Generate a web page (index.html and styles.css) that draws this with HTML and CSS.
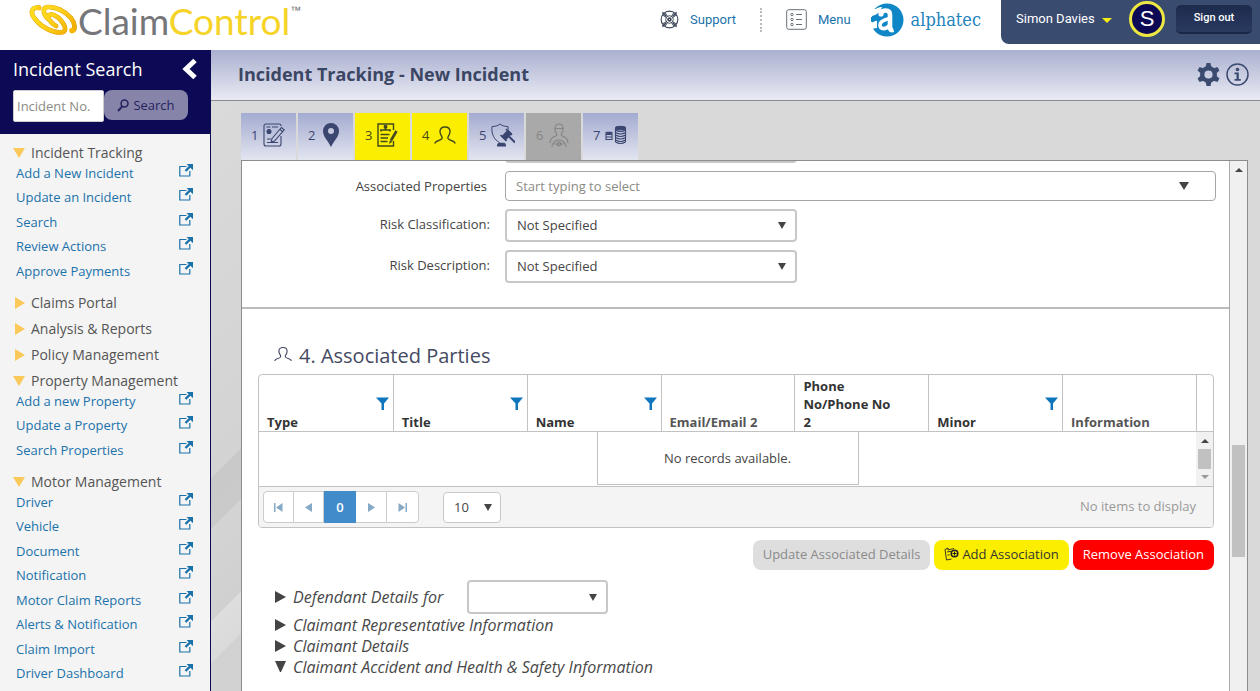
FILE: index.html
```html
<!DOCTYPE html>
<html lang="en">
<head>
<meta charset="utf-8">
<title>Incident Tracking - New Incident</title>
<link rel="stylesheet" href="styles.css">
</head>
<body>
<svg class="sprite" aria-hidden="true">
  <symbol id="i-open" viewBox="0 0 14 13"><path d="M7.500 2.500H.8v9.500h10V7" fill="none" stroke="currentColor" stroke-width="1.200"/><path d="M6.500 7 11.500 2" stroke="currentColor" stroke-width="2.400"/><path d="M7.500 0H14v6.300z" fill="currentColor"/></symbol>
  <symbol id="i-person" viewBox="0 0 22 18"><path d="M1 17c1-3 6-2 7-4.500 1-2-2-3-2-7C6 2.500 8 1 11 1s5 1.500 5 4.500c0 4-3 5-2 7 1 2.500 6 1.500 7 4.500" fill="none" stroke="currentColor" stroke-width="1.400" stroke-linecap="round"/></symbol>
  <symbol id="i-filter" viewBox="0 0 13 13"><path d="M0 .5h13L8 6.500V13H5.500V6.500z" fill="currentColor"/></symbol>
</svg>

<header class="top">
  <a class="logo" href="#">
    <svg class="logo-mark" width="49" height="32" viewBox="0 0 49 32">
      <defs><linearGradient id="gold" gradientUnits="userSpaceOnUse" x1="5" y1="0" x2="40" y2="32"><stop offset="0" stop-color="#ffdf1c"/><stop offset=".5" stop-color="#ffd21a"/><stop offset="1" stop-color="#f0ab00"/></linearGradient></defs>
      <g fill="none" stroke-linecap="round" stroke-linejoin="round">
        <g stroke="#d89a00" stroke-width="4.600">
          <path d="M10 3.500C2 3 1 9 6 15c7 9 19 14 26 13.500 6-.5 5-6 0-12-4-5-9-7-12-5.500-3 2 2 8 7 11"/>
          <path d="M43 27c4-1 3-8-1-13C36 7 26 2.500 19 3c-6 .5-5 6-1 11"/>
        </g>
        <g stroke="url(#gold)" stroke-width="3.800">
          <path d="M10 3.500C2 3 1 9 6 15c7 9 19 14 26 13.500 6-.5 5-6 0-12-4-5-9-7-12-5.500-3 2 2 8 7 11"/>
          <path d="M43 27c4-1 3-8-1-13C36 7 26 2.500 19 3c-6 .5-5 6-1 11"/>
        </g>
      </g>
      <circle cx="43" cy="26.500" r="2.800" fill="#f7b900"/><circle cx="10" cy="4" r="2.500" fill="#ffc81a"/>
    </svg>
    <span class="logo-text">Claim<span class="logo-gold">Control</span></span><span class="logo-tm">™</span>
  </a>
  <nav class="top-nav">
    <a class="top-link support" href="#">
      <svg width="19" height="19" viewBox="0 0 20 20" fill="none" stroke="#3d4658"><circle cx="10" cy="10" r="8.800" stroke-width="1.200"/><circle cx="10" cy="10" r="4"/><circle cx="10" cy="10" r="1.500" stroke-width="1.800"/><path d="M3 5.500 7 8M5.500 3 8 7M17 5.500 13 8M14.500 3 12 7M3 14.500 7 12M5.500 17 8 13M17 14.500 13 12M14.500 17 12 13"/><path d="M2.500 2.500l4 4M17.500 2.500l-4 4M2.500 17.500l4-4M17.500 17.500l-4-4" stroke-width="1.600"/></svg>
      Support</a>
    <span class="top-sep"></span>
    <a class="top-link" href="#">
      <svg width="21" height="21" viewBox="0 0 21 21" fill="none" stroke="#6b7078"><rect x=".7" y=".7" width="19.600" height="19.600" rx="2"/><path d="M10 5.500h6M10 10.500h6M10 15.500h6"/><circle cx="6" cy="5.500" r="1.200"/><circle cx="6" cy="10.500" r="1.200"/><circle cx="6" cy="15.500" r="1.200"/></svg>
      Menu</a>
    <a class="brand" href="#">
      <svg width="33" height="34" viewBox="0 0 33 34"><circle cx="16" cy="17" r="16.500" fill="#0f86c6"/><path d="M0 6h4.500C7 4.500 9 4 11 4L8 11l-3 3H0zM0 19l6-2v8l-6 1z" fill="#fff"/><path d="M1 13q4-1 7-3.500v8q-4 0-7 2z" fill="#0f86c6"/><g fill="none" stroke="#fff"><path d="M9.500 10.500C11 7 19 5.500 19 12v13q0 3 3.500 1.800" stroke-width="4.600"/><path d="M17.500 15.500c-3 1.500-8.500 2-8.500 6.500 0 5 6.500 4.500 9 .5" stroke-width="3.600"/></g><circle cx="10" cy="11" r="2.600" fill="#fff"/></svg>
      <span>alphatec</span>
    </a>
  </nav>
  <div class="user">
    <button class="user-name" type="button">Simon Davies <span class="user-caret"></span></button>
    <span class="avatar">S</span>
    <button class="signout" type="button">Sign out</button>
  </div>
</header>

<div class="body">
  <aside class="side">
    <form class="search">
      <div class="search-head">
        <label for="inc">Incident Search</label>
        <button class="collapse" type="button" aria-label="Collapse"><svg width="16" height="22" viewBox="0 0 16 22"><path d="M13 2.500 4 11l9 8.500" fill="none" stroke="#fff" stroke-width="5"/></svg></button>
      </div>
      <div class="search-row">
        <input id="inc" type="text" placeholder="Incident No.">
        <button class="search-btn" type="button"><svg width="12" height="13" viewBox="0 0 12 13" fill="none" stroke="currentColor"><circle cx="7.500" cy="4.500" r="3.500" stroke-width="1.500"/><path d="M5.200 7.300 1 12" stroke-width="2"/></svg>Search</button>
      </div>
    </form>
    <nav class="menu">
      <section class="group open"><h3>Incident Tracking</h3>
        <ul>
          <li><a href="#">Add a New Incident<svg><use href="#i-open"/></svg></a></li>
          <li><a href="#">Update an Incident<svg><use href="#i-open"/></svg></a></li>
          <li><a href="#">Search<svg><use href="#i-open"/></svg></a></li>
          <li><a href="#">Review Actions<svg><use href="#i-open"/></svg></a></li>
          <li><a href="#">Approve Payments<svg><use href="#i-open"/></svg></a></li>
        </ul></section>
      <section class="group"><h3>Claims Portal</h3></section>
      <section class="group"><h3>Analysis &amp; Reports</h3></section>
      <section class="group"><h3>Policy Management</h3></section>
      <section class="group open"><h3>Property Management</h3>
        <ul>
          <li><a href="#">Add a new Property<svg><use href="#i-open"/></svg></a></li>
          <li><a href="#">Update a Property<svg><use href="#i-open"/></svg></a></li>
          <li><a href="#">Search Properties<svg><use href="#i-open"/></svg></a></li>
        </ul></section>
      <section class="group open"><h3>Motor Management</h3>
        <ul>
          <li><a href="#">Driver<svg><use href="#i-open"/></svg></a></li>
          <li><a href="#">Vehicle<svg><use href="#i-open"/></svg></a></li>
          <li><a href="#">Document<svg><use href="#i-open"/></svg></a></li>
          <li><a href="#">Notification<svg><use href="#i-open"/></svg></a></li>
          <li><a href="#">Motor Claim Reports<svg><use href="#i-open"/></svg></a></li>
          <li><a href="#">Alerts &amp; Notification<svg><use href="#i-open"/></svg></a></li>
          <li><a href="#">Claim Import<svg><use href="#i-open"/></svg></a></li>
          <li><a href="#">Driver Dashboard<svg><use href="#i-open"/></svg></a></li>
        </ul></section>
    </nav>
  </aside>

  <main class="main">
    <div class="titlebar">
      <h1>Incident Tracking - New Incident</h1>
      <button class="icon-btn" type="button" aria-label="Settings"><svg width="23" height="23" viewBox="0 0 23 23"><circle cx="11.500" cy="11.500" r="6.300" fill="none" stroke="#3b4b70" stroke-width="4.400"/><g fill="#3b4b70"><path id="tooth" d="M8.700 4 9.500 0h4l.8 4z"/><use href="#tooth" transform="rotate(60 11.500 11.500)"/><use href="#tooth" transform="rotate(120 11.500 11.500)"/><use href="#tooth" transform="rotate(180 11.500 11.500)"/><use href="#tooth" transform="rotate(240 11.500 11.500)"/><use href="#tooth" transform="rotate(300 11.500 11.500)"/></g></svg></button>
      <button class="icon-btn" type="button" aria-label="Information"><svg width="23" height="23" viewBox="0 0 23 23"><circle cx="11.500" cy="11.500" r="10.500" fill="none" stroke="#3b4b70" stroke-width="1.500"/><circle cx="11.500" cy="6.500" r="1.800" fill="#3b4b70"/><path d="M8.500 9.500h4.300v6.500h2v1.800H8.500V16h2v-4.700h-2z" fill="#3b4b70"/></svg></button>
    </div>
    <div class="work">
      <nav class="tabs">
        <button class="tab" type="button">1<svg width="22" height="24" viewBox="0 0 22 24" fill="none" stroke="currentColor" stroke-width="1.100"><path d="M18 13v8q0 2-2 2H3q-2 0-2-2V3q0-2 2-2h13q2 0 2 2"/><path d="M3.500 4h4M9 4h6M4 16h4M4 19.500h11"/><circle cx="6" cy="8.500" r="2" fill="currentColor"/><path d="M9 15.500 18.500 4.500l2.700 2.300L11.500 18l-3.300 1zM17 6.500l2.700 2.200" fill="#c3c8de"/></svg></button>
        <button class="tab" type="button">2<svg width="22" height="24" viewBox="0 0 20 24"><path d="M10 24C6.500 17 2 13.500 2 8a8 8 0 0 1 16 0c0 5.500-4.500 9-8 16z" fill="currentColor"/><circle cx="10" cy="8" r="3" fill="#c3c8de"/></svg></button>
        <button class="tab done" type="button">3<svg width="22" height="24" viewBox="0 0 22 24" fill="none" stroke="currentColor" stroke-width="1.400"><path d="M16.500 7V1H1v22h15.500v-5"/><path d="M3.500 11.500h9M3.500 15h7.500M3.500 18.500h7"/><path d="M4 8.500V7h9v1.500M8.500 3.500v3" stroke-width="1.700"/><circle cx="8.500" cy="3.800" r="1.300" fill="currentColor"/><path d="M14 17.500 19.500 8" stroke-width="2.600"/><path d="m12.500 20.500.5-3 2 1.200z" fill="currentColor" stroke-width=".5"/></svg></button>
        <button class="tab done" type="button">4<svg width="22" height="20"><use href="#i-person"/></svg></button>
        <button class="tab" type="button">5<svg width="24" height="24" viewBox="0 0 24 24" fill="none" stroke="currentColor"><path d="M9 1C6.500 3 4 3.500 1 3.500 0 11 3.500 17 8.500 19.500M9 1c2.500 2 5 2.500 8 2.500l.2 3"/><path d="M12.500 15.500 19 8.500" stroke-width="6"/><path d="m9.500 12 6 6M15 6l6 6" stroke-width="1.600"/><path d="m18 13.500 6 6" stroke-width="2"/><path d="M6 23.500v-2l1.500-1.800h6l1.500 1.800v2z" fill="currentColor" stroke="none"/></svg></button>
        <button class="tab off" type="button" disabled>6<svg width="22" height="25" viewBox="0 0 20 25" fill="none" stroke="currentColor" stroke-width="1.200"><path d="M7.500 10.500C5 8 5 1 10 1s5 7 2.500 9.500M7.500 10v3M12.500 10v3M1 20c0-4 2-6 6-7M19 20c0-4-2-6-6-7"/><path d="M5.500 5.500h9M3 24a7 7 0 0 1 14 0M5 21h10"/><circle cx="10" cy="21" r="1.800"/></svg></button>
        <button class="tab" type="button">7<svg width="22" height="20" viewBox="0 0 22 20"><g fill="none" stroke="currentColor" stroke-width="1.100"><path d="M1 7.500h6v7H1zM1 9.500h6M1 12h6"/><path d="M1.500 8h5" stroke-width="2.500"/><ellipse cx="15.500" cy="3" rx="5" ry="1.800" fill="currentColor"/><path d="M10.500 5q5 3 10 0M10.500 7.500q5 3 10 0M10.500 10q5 3 10 0M10.500 12.500q5 3 10 0M10.500 15q5 3 10 0M10.500 17q5 3 10 0M10.500 3v14M20.500 3v14" /></g></svg></button>
      </nav>
      <div class="panel">
        <div class="content">
          <form class="fields">
            <select class="select prev" aria-label="Property type"><option></option></select>
            <label for="props" class="no-colon">Associated Properties</label>
            <div class="combo"><input id="props" type="text" placeholder="Start typing to select"><span class="arrow"></span></div>
            <label for="rc">Risk Classification:</label>
            <select id="rc" class="select"><option>Not Specified</option></select>
            <label for="rd">Risk Description:</label>
            <select id="rd" class="select"><option>Not Specified</option></select>
          </form>
          <section class="parties">
            <h2><svg width="18" height="16" viewBox="0 0 22 18"><use href="#i-person"/></svg>4. Associated Parties</h2>
            <div class="grid">
              <table>
                <colgroup><col><col><col><col><col><col><col><col class="gutter"></colgroup>
                <thead><tr>
                  <th><svg><use href="#i-filter"/></svg>Type</th>
                  <th><svg><use href="#i-filter"/></svg>Title</th>
                  <th><svg><use href="#i-filter"/></svg>Name</th>
                  <th class="plain">Email/Email 2</th>
                  <th>Phone No/Phone No 2</th>
                  <th><svg><use href="#i-filter"/></svg>Minor</th>
                  <th class="plain">Information</th>
                  <th></th>
                </tr></thead>
                <tbody><tr>
                  <td colspan="7"><div class="empty">No records available.</div></td>
                  <td><div class="mini-scroll"><span class="up"></span><span class="mini-thumb"></span><span class="down"></span></div></td>
                </tr></tbody>
              </table>
              <div class="pager">
                <div class="pages">
                  <button type="button" aria-label="First"><svg width="9" height="9" viewBox="0 0 9 9"><path d="M0 0h1.500v9H0zM8.500 0v9L2 4.500z"/></svg></button>
                  <button type="button" aria-label="Previous"><svg width="9" height="9" viewBox="0 0 9 9"><path d="M8 0v9L1 4.500z"/></svg></button>
                  <button type="button" class="current">0</button>
                  <button type="button" aria-label="Next"><svg width="9" height="9" viewBox="0 0 9 9"><path d="M1 0v9l7-4.500z"/></svg></button>
                  <button type="button" aria-label="Last"><svg width="9" height="9" viewBox="0 0 9 9"><path d="M7.500 0H9v9H7.500zM.5 0v9L7 4.500z"/></svg></button>
                </div>
                <select class="select size" aria-label="Page size"><option>10</option></select>
                <span class="count">No items to display</span>
              </div>
            </div>
            <div class="actions">
              <button class="btn grey" type="button" disabled>Update Associated Details</button>
              <button class="btn yellow" type="button"><svg width="15" height="14" viewBox="0 0 15 14" fill="none" stroke="#222"><path d="M1 2.500 4 1v2l6-1.500M1 2.500l1.500 10.500 5-1M3 5l4-.7M3.500 8h2" stroke-width=".9"/><circle cx="10.500" cy="6.500" r="3.300" stroke-width="1.600"/><path d="M10.500 4.500v4M8.500 6.500h4"/></svg>Add Association</button>
              <button class="btn red" type="button">Remove Association</button>
            </div>
            <div class="folds">
              <div class="fold first"><button type="button" class="fold-btn"><span class="tri"></span>Defendant Details for</button><select class="select who" aria-label="Defendant"><option></option></select></div>
              <div class="fold"><button type="button" class="fold-btn"><span class="tri"></span>Claimant Representative Information</button></div>
              <div class="fold"><button type="button" class="fold-btn"><span class="tri"></span>Claimant Details</button></div>
              <div class="fold"><button type="button" class="fold-btn"><span class="tri open"></span>Claimant Accident and Health &amp; Safety Information</button></div>
            </div>
          </section>
        </div>
        <div class="scroll"><span class="up"></span><span class="thumb"></span></div>
      </div>
    </div>
  </main>
</div>
</body>
</html>
```
FILE: styles.css
```css
*, *::before { box-sizing: border-box; }
body {
  margin: 0;
  height: 100vh;
  overflow: hidden;
  display: flex;
  flex-direction: column;
  font: 13px/18px "Open Sans", sans-serif;
  color: #444;
  background: #fff;
}
button, input, select { font: inherit; color: inherit; margin: 0; }
button { border: 0; background: none; padding: 0; cursor: pointer; }
a { text-decoration: none; color: #1b72ab; }
svg { display: block; flex: none; }
.sprite { position: absolute; width: 0; height: 0; }

/* header */
.top { display: flex; justify-content: space-between; height: 50px; flex: none; font-family: Roboto, sans-serif; }
.logo { display: flex; align-items: flex-start; padding: 4px 0 0 29px; }
.logo-text { font: 37px/34px Lato, sans-serif; color: #75767a; }
.logo-gold { color: #f5d327; }
.logo-tm { font: 11px/12px "Liberation Sans", sans-serif; color: #666; }
.top-nav { display: flex; align-items: center; height: 39px; margin-left: auto; }
.top-link { display: flex; align-items: center; gap: 11px; font-size: 13px; }
.support { padding-right: 24px; }
.top-sep { border-left: 2px dotted #bbb; height: 24px; margin-right: 24px; }
.brand { display: flex; align-items: center; gap: 7px; padding-left: 20px; color: #1f83bd; font: 18px/24px "DejaVu Serif Condensed", "DejaVu Serif", serif; }
.user { display: flex; align-items: center; width: 259px; height: 44px; margin-left: 20px; padding: 0 8px 6px 15px; background: #3a4b70; border-radius: 0 0 0 8px; color: #fff; }
.user-name { display: flex; align-items: center; gap: 7px; font-size: 13px; }
.user-caret { border: 5px solid transparent; border-top-color: #f7ec13; border-bottom: 0; margin-top: 3px; }
.avatar { width: 36px; height: 36px; margin-left: auto; border: 3px solid #ece741; border-radius: 50%; background: #0d0a55; font: 22px/30px "Liberation Sans", sans-serif; text-align: center; }
.signout { width: 76px; height: 29px; margin-left: 11px; border-radius: 5px; background: linear-gradient(#1d2b4d, #293960); border-bottom: 2px solid #1a2746; font-size: 11px; font-weight: 500; }

/* layout */
.body { display: flex; flex: 1; min-height: 0; }
.side { width: 211px; flex: none; background: #f4f4f4; border-right: 1px solid #0d0a55; overflow: hidden; }
.main { flex: 1; min-width: 0; display: flex; flex-direction: column; }

/* sidebar */
.search { height: 84px; padding: 7px 12px 0 13px; background: #0d0a55; color: #fff; }
.search-head { display: flex; justify-content: space-between; align-items: center; font-size: 18px; line-height: 24px; }
.search-row { display: flex; margin-top: 9px; }
.search-row input { width: 91px; height: 32px; padding: 0 3px; border: 1px solid #ccc; border-radius: 2px; background: #fff; color: #444; }
input::placeholder { color: #8b8b84; opacity: 1; }
.search-btn { display: flex; align-items: center; justify-content: center; gap: 4px; width: 84px; height: 30px; border-radius: 8px; background: #8684a8; color: #26235f; }
.menu { padding: 10px 16px 0; }
.group h3 { display: flex; align-items: center; gap: 6px; margin: 0 0 8px; font-size: 14px; font-weight: 400; line-height: 18px; color: #555; }
.group h3::before { content: ""; margin-left: -1px; border: 6px solid transparent; border-left: 10px solid #fbc85a; border-right: 0; }
.group.open h3 { margin-bottom: 0; }
.group.open h3::before { margin-left: -3px; border: 6px solid transparent; border-top: 10px solid #fbc85a; border-bottom: 0; }
.group ul { list-style: none; margin: 0 0 10px; padding: 0; }
.group li { height: 24px; }
.group li:nth-child(even) { height: 25px; }
.group li a { display: flex; justify-content: space-between; line-height: 22px; }
.group li svg { width: 14px; height: 13px; margin: 2px 1px 0 0; }

/* title bar */
.titlebar { display: flex; align-items: center; gap: 6px; height: 51px; flex: none; padding: 0 11px 2px 27px; background: linear-gradient(#aab0d0, #e9eaf3); border-bottom: 1px solid #8b8b93; }
.titlebar h1 { flex: 1; margin: 0; font-size: 18px; line-height: 24px; font-weight: 700; color: #3b4664; }

.work {
  flex: 1; min-height: 0; display: flex; flex-direction: column; padding: 12px 12px 0 30px;
  background: linear-gradient(135deg, #dadada 0, #d3d3d3 267px, #c9c9c9 267px, #cacaca 303px, #d4d4d4 303px, #d0d0d0 368px, #dedede 368px, #dadada 398px, #d2d2d2 398px) left / 30px 100% no-repeat #d9d9d9;
}
.tabs { display: flex; gap: 2px; }
.tab { display: flex; align-items: center; gap: 5px; width: 55px; height: 47px; padding: 0 0 3px 10px; background: linear-gradient(#a3abd0, #e3e5f0); color: #3a4570; }
.tab.done { background: #fbee00; color: #444a1c; }
.tab.off { background: #a9a9a9; color: #858585; }

.panel { flex: 1; min-height: 0; display: flex; border: 1px solid #8d8d90; border-bottom: 0; background: #fff; }
.content { flex: 1; min-width: 0; overflow: hidden; }
.scroll { width: 18px; background: #f0f0f0; border-left: 1px solid #aaa; display: flex; flex-direction: column; align-items: center; padding-top: 7px; }
.up, .down { border: 4px solid transparent; border-bottom: 4px solid #444; border-top: 0; }
.down { border-top: 4px solid #999; border-bottom: 0; }
.thumb { width: 13px; height: 112px; margin-top: 273px; background: #c1c1c1; }

/* fields */
.fields { display: grid; grid-template-columns: 248px 1fr; column-gap: 15px; row-gap: 8px; align-items: center; padding: 0 13px 24px 0; border-bottom: 2px solid #bcbcbc; }
.fields label { text-align: right; line-height: 18px; padding-bottom: 4px; }
.fields label.no-colon { padding: 0 3px 0 0; }
.select {
  appearance: none; width: 292px; height: 33px; padding: 0 30px 2px 10px; border: 2px solid #c8c8c8; border-radius: 4px;
  background: #fff url("data:image/svg+xml,%3Csvg xmlns='http://www.w3.org/2000/svg' width='8' height='7'%3E%3Cpath d='M0 0h8L4 7z' fill='%23444'/%3E%3C/svg%3E") no-repeat right 9px center;
}
.select.prev { grid-column: 2; margin-top: -31px; }
.combo { display: flex; align-items: center; height: 30px; border: 1px solid #a6a6a6; border-radius: 4px; padding-right: 26px; }
.combo input { flex: 1; border: 0; padding: 0 10px; background: none; outline: 0; }
.arrow { border: 5px solid transparent; border-top: 8px solid #444; border-bottom: 0; }

/* parties */
.parties { padding: 33px 15px 0 16px; }
.parties h2 { display: flex; align-items: center; gap: 7px; margin: 0 0 5px 16px; font-size: 20px; line-height: 27px; font-weight: 400; color: #454a62; }
.parties h2 svg { margin-bottom: 4px; }
.grid { border: 1px solid #c2c2c2; border-radius: 4px; overflow: hidden; }
table { width: 100%; table-layout: fixed; border-collapse: separate; border-spacing: 0; }
.gutter { width: 17px; }
th { height: 57px; padding: 0 30px 0 8px; text-align: left; vertical-align: bottom; font-weight: 700; color: #333; border-left: 1px solid #c2c2c2; border-bottom: 1px solid #c2c2c2; }
th:first-child { border-left: 0; }
th:last-child { padding: 0; }
th.plain { color: #555; }
th svg { width: 13px; height: 13px; margin: 0 -26px 3px auto; color: #0f75bc; }
td { height: 54px; padding: 0; vertical-align: top; }
.empty { width: 262px; height: 53px; margin: 0 auto; border: 1px solid #c2c2c2; border-top: 0; line-height: 52px; text-align: center; }
.mini-scroll { height: 54px; background: #f1f1f1; display: flex; flex-direction: column; align-items: center; justify-content: space-between; padding: 7px 0; }
.mini-thumb { width: 13px; height: 20px; background: #c1c1c1; }
.pager { display: flex; align-items: center; height: 41px; padding: 0 17px 0 4px; border-top: 1px solid #c2c2c2; background: #f4f4f4; }
.pages { display: flex; height: 32px; border: 1px solid #ccc; border-radius: 4px; background: #fff; }
.pages button { width: 30px; display: flex; align-items: center; justify-content: center; border-right: 1px solid #ccc; fill: #86a9c5; }
.pages .current ~ button { width: 31px; }
.pages button:last-child { border-right: 0; }
.pages .current { width: 32px; margin: -1px 0; background: #428bca; border: 0; color: #fff; font-weight: 600; }
.select.size { width: 58px; height: 31px; margin-left: 24px; border-width: 1px; background-position: right 8px center; padding-bottom: 0; }
.count { margin-left: auto; padding-bottom: 2px; color: #999; }

.actions { display: flex; justify-content: flex-end; gap: 4px; margin-top: 12px; }
.btn { display: flex; align-items: center; gap: 3px; height: 30px; padding: 0 10px 2px; border-radius: 8px; }
.grey { background: #dedede; color: #8a8a8a; }
.yellow { background: #fbee00; color: #333; }
.red { background: #f00; color: #fff; }

.folds { margin: 10px 0 0 17px; }
.fold { height: 21px; display: flex; align-items: center; }
.fold.first { height: 34px; gap: 24px; }
.fold-btn { display: flex; align-items: center; gap: 7px; font-size: 16px; line-height: 22px; font-style: italic; color: #484848; }
.tri { border: 6px solid transparent; border-left: 11px solid #444; border-right: 0; }
.tri.open { border: 5px solid transparent; border-top: 11px solid #444; border-bottom: 0; width: 11px; }
.select.who { width: 141px; height: 34px; }
```
